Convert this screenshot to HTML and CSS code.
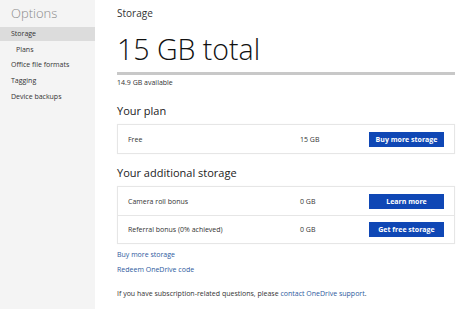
FILE: index.html
```html
<!DOCTYPE html>
<html>
<head>
<meta charset="utf-8">
<link rel="stylesheet" href="styles.css">
</head>
<body>
<div class="app">
  <nav class="sidebar">
    <div class="side-title">Options</div>
    <ul class="side-list">
      <li class="side-item active">Storage</li>
      <li class="side-item sub">Plans</li>
      <li class="side-item">Office file formats</li>
      <li class="side-item">Tagging</li>
      <li class="side-item">Device backups</li>
    </ul>
  </nav>
  <main class="main">
    <div class="page-title">Storage</div>
    <div class="total">15 GB total</div>
    <div class="usage-bar"></div>
    <div class="available">14.9 GB available</div>

    <h2 class="section">Your plan</h2>
    <div class="card">
      <div class="row">
        <span class="row-name">Free</span>
        <span class="row-size">15 GB</span>
        <span class="btn">Buy more storage</span>
      </div>
    </div>

    <h2 class="section second">Your additional storage</h2>
    <div class="card">
      <div class="row">
        <span class="row-name">Camera roll bonus</span>
        <span class="row-size">0 GB</span>
        <span class="btn">Learn more</span>
      </div>
      <div class="row divided">
        <span class="row-name">Referral bonus (0% achieved)</span>
        <span class="row-size">0 GB</span>
        <span class="btn">Get free storage</span>
      </div>
    </div>

    <div class="links">
      <a class="link">Buy more storage</a>
      <a class="link">Redeem OneDrive code</a>
    </div>
    <p class="note">If you have subscription-related questions, please <a class="link inline">contact OneDrive support</a>.</p>
  </main>
</div>
</body>
</html>
```

FILE: styles.css
```css
* { box-sizing: border-box; }
html, body { margin: 0; padding: 0; }
body {
  font-family: "Open Sans", "Noto Sans", sans-serif;
  color: #222;
  background: #fff;
  width: 468px;
  height: 309px;
  overflow: hidden;
}
.app { display: flex; height: 309px; }
.sidebar {
  width: 95px;
  flex: none;
  background: #f4f4f4;
  padding-top: 4px;
}
.side-title {
  font-size: 13px;
  font-weight: 300;
  color: #8a8a8a;
  padding-left: 11px;
  height: 23px;
  line-height: 18px;
}
.side-list { list-style: none; margin: 0; padding: 0; }
.side-item {
  font-size: 7px;
  color: #333;
  padding-left: 11px;
  height: 16px;
  line-height: 14px;
}
.side-item.active { background: #dcdcdc; height: 14px; line-height: 13px; margin-bottom: 1px; }
.side-item.sub { padding-left: 16px; line-height: 15px; }

.main {
  flex: 1;
  padding: 5px 13px 0 22px;
}
.page-title {
  font-size: 10px;
  color: #333;
  line-height: 16px;
}
.total {
  font-size: 28.5px;
  font-weight: 300;
  color: #111;
  line-height: 40px;
  margin-top: 8px;
}
.usage-bar {
  height: 3px;
  background: #c8c8c8;
  margin-top: 3px;
}
.available {
  font-size: 7px;
  color: #333;
  line-height: 10px;
  margin-top: 3px;
}
.section {
  font-size: 11px;
  font-weight: 400;
  color: #222;
  margin: 15px 0 0 0;
  line-height: 16px;
}
.section.second { margin-top: 11px; }
.card {
  border: 1px solid #e6e6e6;
  box-shadow: 0 0 1px rgba(0,0,0,0.06);
  margin-top: 5px;
}
.row {
  display: flex;
  align-items: center;
  height: 28px;
  padding: 0 10px 0 10px;
  font-size: 7px;
  color: #333;
}
.row.divided { border-top: 1px solid #e6e6e6; }
.row-name { flex: 1; }
.row-size { width: 69px; }
.btn {
  width: 75px;
  height: 15px;
  line-height: 15px;
  background: #0f47b5;
  color: #fff;
  font-weight: 700;
  text-align: center;
  font-size: 7px;
}
.links {
  display: flex;
  flex-direction: column;
  gap: 5px;
  margin-top: 6px;
}
.link {
  font-size: 7px;
  color: #2e5a9e;
  line-height: 10px;
}
.note {
  font-size: 7px;
  color: #333;
  margin: 14px 0 0 0;
  line-height: 10px;
}
.link.inline { line-height: inherit; }
```
